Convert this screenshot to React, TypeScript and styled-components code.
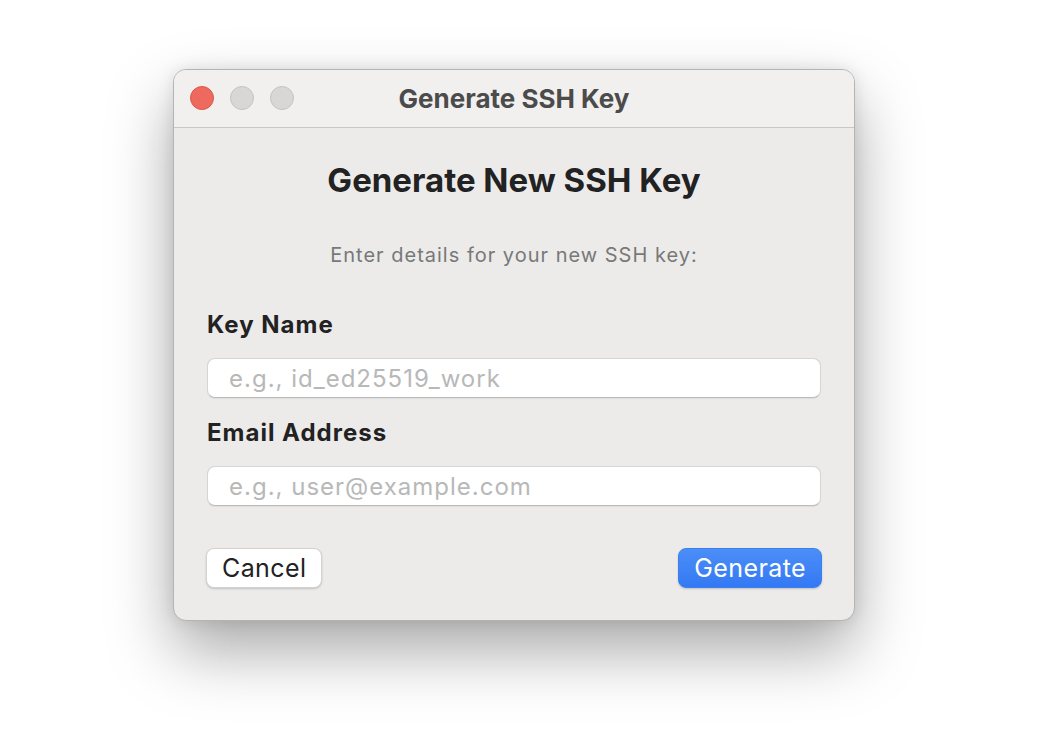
import React from "react";
import styled, { createGlobalStyle } from "styled-components";

const GlobalStyle = createGlobalStyle`
  html, body {
    margin: 0;
    padding: 0;
    background: #ffffff;
    font-family: Inter, "Noto Sans", "Liberation Sans", sans-serif;
  }
`;

const App: React.FC = () => {
  return (
    <Page>
      <GlobalStyle />
      <Window>
        <TitleBar>
          <Lights>
            <Light $color="#ee6a5e" $border="#d8574c" />
            <Light $color="#d8d7d6" $border="#c4c3c2" />
            <Light $color="#d8d7d6" $border="#c4c3c2" />
          </Lights>
          <WindowTitle>Generate SSH Key</WindowTitle>
        </TitleBar>
        <Body>
          <Heading>Generate New SSH Key</Heading>
          <Subtitle>Enter details for your new SSH key:</Subtitle>
          <Field>
            <Label>Key Name</Label>
            <Input placeholder="e.g., id_ed25519_work" />
          </Field>
          <Field>
            <Label>Email Address</Label>
            <Input placeholder="e.g., user@example.com" />
          </Field>
          <Actions>
            <Button>Cancel</Button>
            <Button $primary>Generate</Button>
          </Actions>
        </Body>
      </Window>
    </Page>
  );
};

export default App;

const Page = styled.div`
  width: 1038px;
  height: 732px;
  box-sizing: border-box;
  padding: 69px 0 0 173px;
  background: #ffffff;
  overflow: hidden;
`;

const Window = styled.div`
  width: 682px;
  height: 552px;
  box-sizing: border-box;
  border-radius: 13px;
  border: 1px solid #b5b4b3;
  background: #ecebea;
  box-shadow: 0 30px 64px rgba(0, 0, 0, 0.34), 0 0 16px rgba(0, 0, 0, 0.1);
  overflow: hidden;
  display: flex;
  flex-direction: column;
`;

const TitleBar = styled.div`
  position: relative;
  height: 57px;
  flex-shrink: 0;
  display: flex;
  align-items: center;
  justify-content: center;
  background: #f1f0ef;
  border-bottom: 1px solid #c9c8c7;
`;

const Lights = styled.div`
  position: absolute;
  left: 16px;
  top: 16px;
  display: flex;
  gap: 16px;
`;

const Light = styled.span<{ $color: string; $border: string }>`
  width: 24px;
  height: 24px;
  box-sizing: border-box;
  border-radius: 50%;
  background: ${(p) => p.$color};
  border: 1px solid ${(p) => p.$border};
`;

const WindowTitle = styled.div`
  font-size: 26px;
  font-weight: 700;
  color: #4b4b4b;
`;

const Body = styled.div`
  flex: 1;
  display: flex;
  flex-direction: column;
  padding: 32px 33px 0 33px;
`;

const Heading = styled.h1`
  margin: 0;
  text-align: center;
  font-size: 33px;
  line-height: 40px;
  font-weight: 700;
  color: #222222;
`;

const Subtitle = styled.p`
  margin: 43px 0 0;
  text-align: center;
  font-size: 20px;
  line-height: 24px;
  letter-spacing: 1px;
  color: #787878;
`;

const Field = styled.div`
  display: flex;
  flex-direction: column;
  margin-top: 44px;

  & + & {
    margin-top: 21px;
  }
`;

const Label = styled.label`
  font-size: 24px;
  line-height: 28px;
  font-weight: 700;
  letter-spacing: 1px;
  color: #222222;
  margin-bottom: 19px;
`;

const Input = styled.input`
  height: 40px;
  box-sizing: border-box;
  border: 1px solid #d6d5d4;
  border-bottom-color: #bcbbba;
  border-radius: 8px;
  background: #ffffff;
  padding: 0 21px;
  font-family: inherit;
  font-size: 24px;
  letter-spacing: 1px;
  color: #222222;
  outline: none;
  box-shadow: 0 1px 1px rgba(0, 0, 0, 0.06);

  &::placeholder {
    color: #b8b8b8;
  }
`;

const Actions = styled.div`
  display: flex;
  justify-content: space-between;
  margin: 42px -1px 0;
`;

const Button = styled.button<{ $primary?: boolean }>`
  height: 40px;
  box-sizing: border-box;
  padding: 0 15px;
  border-radius: 8px;
  font-family: inherit;
  font-size: 25px;
  letter-spacing: 0.4px;
  cursor: pointer;
  border: 1px solid ${(p) => (p.$primary ? "#3a80f0" : "#d4d3d2")};
  color: ${(p) => (p.$primary ? "#ffffff" : "#222222")};
  background: ${(p) =>
    p.$primary ? "linear-gradient(#4b8ef7, #3479f4)" : "#ffffff"};
  box-shadow: 0 1px 2px rgba(0, 0, 0, 0.18);
`;
